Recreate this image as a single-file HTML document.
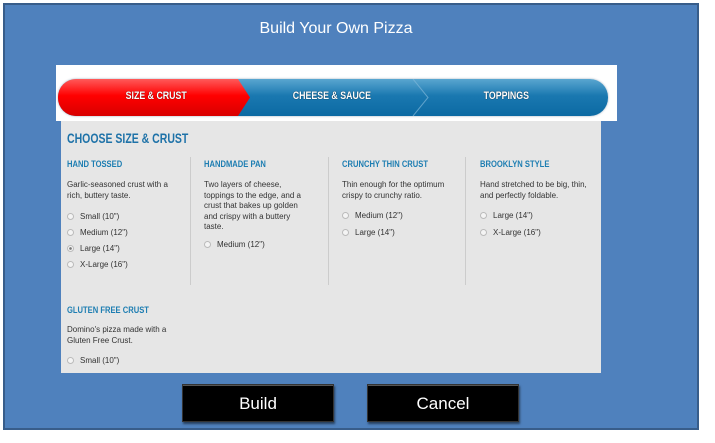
<!DOCTYPE html>
<html><head><meta charset="utf-8"><style>
*{margin:0;padding:0;box-sizing:border-box}
body{width:715px;height:443px;background:#fff;position:relative;overflow:hidden;font-family:"Liberation Sans",sans-serif}
.box{position:absolute;left:3px;top:3px;width:696px;height:427px;background:#4f81bd;border:2px solid #385d8a}
.title{position:absolute;left:0;width:672px;top:20px;text-align:center;color:#fff;font-size:16px}
.strip{position:absolute;left:56px;top:65px;width:561px;height:56px;background:#fff}
.bar{position:absolute;left:58px;top:79px;width:550px;height:37px;border-radius:18px;overflow:hidden;background:linear-gradient(#5aa6d0,#1a78b0 45%,#0c6aa3);box-shadow:0 0 2px #9ab}
.arrow{position:absolute;top:0}
.lbl{position:absolute;top:11px;color:#fff;font-weight:bold;font-size:11px;transform:scaleX(.8);transform-origin:center;text-shadow:0 0 1px #000}
.panel{position:absolute;left:61px;top:121px;width:540px;height:252px;background:#e6e6e6}
.h{position:absolute;color:#1e72a8;font-weight:bold;font-size:14px;transform:scaleX(.75);transform-origin:left;white-space:nowrap}
.sh{position:absolute;color:#1e7eb2;font-weight:bold;font-size:9.5px;transform:scaleX(.8);transform-origin:left;white-space:nowrap}
.d{position:absolute;font-size:8px;line-height:10.5px;color:#333;width:115px}
.r{position:absolute;font-size:8px;color:#333;white-space:nowrap}
.r i{display:inline-block;width:7px;height:7px;border:1px solid #bbb;border-radius:50%;background:#f4f4f4;margin-right:6px;vertical-align:-1px}
.r i.on{background:radial-gradient(#777 30%,#f4f4f4 45%)}
.v{position:absolute;top:157px;width:1px;height:128px;background:#ccc}
.btn{position:absolute;top:384px;width:152px;height:38px;background:#000;color:#fff;font-size:17px;text-align:center;line-height:38px;border:1px solid #333;box-shadow:1px 2px 2px rgba(0,0,0,.5),inset 0 1px 0 #555}
</style></head><body>
<div class="box"></div>
<div class="title">Build Your Own Pizza</div>
<div class="strip"></div>
<div class="bar">
<svg class="arrow" width="550" height="37" style="left:0"><defs><linearGradient id="g" x1="0" y1="0" x2="0" y2="1"><stop offset="0" stop-color="#ff5a5a"/><stop offset=".45" stop-color="#f00"/><stop offset="1" stop-color="#d80000"/></linearGradient></defs><polygon points="180,0 192,18.5 180,37 0,37 0,0" fill="url(#g)"/><polyline points="355,0 370,18.5 355,37" fill="none" stroke="#7fb6d8" stroke-width="1" opacity=".7"/></svg>
<div class="lbl" style="left:60px">SIZE &amp; CRUST</div>
<div class="lbl" style="left:225px">CHEESE &amp; SAUCE</div>
<div class="lbl" style="left:420px">TOPPINGS</div>
</div>
<div class="panel"></div>
<div class="h" style="left:67px;top:130px">CHOOSE SIZE &amp; CRUST</div>
<div class="v" style="left:190px"></div><div class="v" style="left:328px"></div><div class="v" style="left:465px"></div>
<div class="sh" style="left:67px;top:159px">HAND TOSSED</div>
<div class="d" style="left:67px;top:180px;width:108px">Garlic-seasoned crust with a rich, buttery taste.</div>
<div class="r" style="left:67px;top:212px"><i></i>Small (10")</div>
<div class="r" style="left:67px;top:228px"><i></i>Medium (12")</div>
<div class="r" style="left:67px;top:244px"><i class="on"></i>Large (14")</div>
<div class="r" style="left:67px;top:260px"><i></i>X-Large (16")</div>
<div class="sh" style="left:204px;top:159px">HANDMADE PAN</div>
<div class="d" style="left:204px;top:180px;width:105px">Two layers of cheese, toppings to the edge, and a crust that bakes up golden and crispy with a buttery taste.</div>
<div class="r" style="left:204px;top:240px"><i></i>Medium (12")</div>
<div class="sh" style="left:342px;top:159px">CRUNCHY THIN CRUST</div>
<div class="d" style="left:342px;top:180px;width:115px">Thin enough for the optimum crispy to crunchy ratio.</div>
<div class="r" style="left:342px;top:211px"><i></i>Medium (12")</div>
<div class="r" style="left:342px;top:228px"><i></i>Large (14")</div>
<div class="sh" style="left:480px;top:159px">BROOKLYN STYLE</div>
<div class="d" style="left:480px;top:180px;width:115px">Hand stretched to be big, thin, and perfectly foldable.</div>
<div class="r" style="left:480px;top:211px"><i></i>Large (14")</div>
<div class="r" style="left:480px;top:228px"><i></i>X-Large (16")</div>
<div class="sh" style="left:67px;top:305px">GLUTEN FREE CRUST</div>
<div class="d" style="left:67px;top:325px">Domino's pizza made with a Gluten Free Crust.</div>
<div class="r" style="left:67px;top:356px"><i></i>Small (10")</div>
<div class="btn" style="left:182px">Build</div>
<div class="btn" style="left:367px">Cancel</div>
</body></html>
